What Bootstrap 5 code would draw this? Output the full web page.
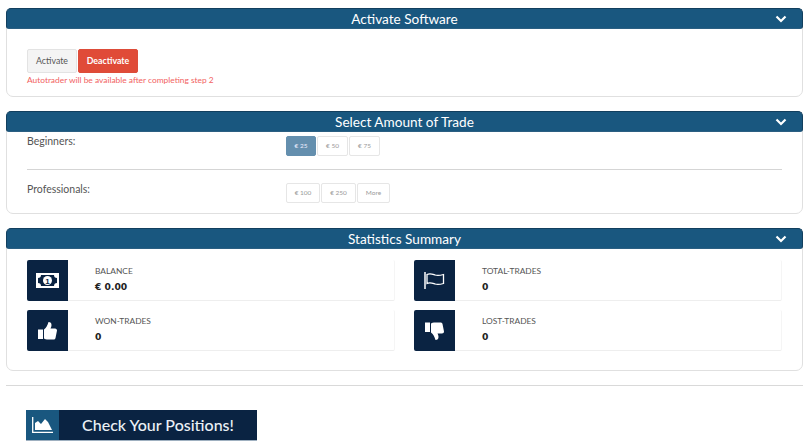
<!DOCTYPE html>
<html lang="en"><head><meta charset="utf-8"><title>Dashboard</title>
<link href="https://cdn.jsdelivr.net/npm/bootstrap@5.3.0/dist/css/bootstrap.min.css" rel="stylesheet">
<style>
html,body{height:443px;overflow:hidden}
body{background:#fff;font-family:"Lato",sans-serif;color:#555;padding:8px 2px 0 6px}
.panel-box{border:1px solid #e0e0e0;border-radius:7px;margin-bottom:14px;background:#fff}
.panel-head{height:21px;margin:-1px -1px 0;background:#19577f;border:1px solid #123f5e;border-bottom-color:#2b5f82;border-radius:5px 5px 3px 3px;color:#fff;font-size:13.6px;line-height:20px;position:relative;text-align:center}
.panel-head svg{position:absolute;right:15px;top:6px}
.body-one{height:67px;padding:20px 20px 0}
.soft-btn{font-size:8.8px;height:24px;width:50px;padding:0;line-height:22px;border-radius:2px;border:1px solid #e3e3e3;background:#f4f4f4;color:#555}
.soft-btn.red-btn{background:#e04b38;border-color:#dd4c39;color:#fff;font-weight:700;margin-left:1px;width:60px;padding:0}
.warn-line{color:#f2625f;font-size:8.4px;line-height:12px;margin-top:1px}
.body-two{height:81px;padding:0 20px}
.amt-row{height:37px;padding-top:2px}
.amt-row.second{height:44px;padding-top:12px;border-top:1px solid #d5d5d5}
.amt-label{width:259px;font-size:10.5px;line-height:15px;color:#555}
.amt-group{gap:1px;padding-top:2px}
.second .amt-group{padding-top:1px}
.amt-btn{height:20px;font-size:6.5px;line-height:18px;border:1px solid #e6e6e6;border-radius:2px;color:#999;background:#fff;text-align:center;padding:0}
.amt-btn.chosen{background:#648fae;border-color:#648fae;color:#eef}
.body-three{height:121px;padding:11px 20px 0;display:grid;grid-template-columns:368px 368px;column-gap:19px;row-gap:9px;grid-auto-rows:41px}
.stat-tile{display:flex;border-bottom:1px solid #eee;border-right:1px solid #f5f5f5;border-radius:2px}
.stat-icon{width:41px;height:41px;background:#0a2342;border-radius:2px 0 0 2px;display:flex;align-items:center;justify-content:center;flex:none}
.stat-text{padding:5px 0 0 27px}
.stat-name{font-size:8.4px;line-height:12px;color:#555}
.stat-val{font-family:"DejaVu Sans",sans-serif;font-weight:700;font-size:9.2px;line-height:12px;color:#222;margin-top:4px}
.rule-line{border-top:1px solid #d9d9d9;height:25px}
.cta-link{display:flex;width:231px;height:31px;margin-left:20px;background:#0a2342;border-bottom:1px solid #9fb0c0;text-decoration:none;color:#eaf0f5}
.cta-icon{width:33px;background:#19577f;display:flex;align-items:center;justify-content:center;flex:none}
.cta-text{flex:1;text-align:center;font-size:16px;line-height:30px;font-weight:500}
</style></head><body>

<section class="panel-box">
  <div class="panel-head">Activate Software<svg width="12" height="8" viewBox="0 0 12 8"><path d="M1.5 1.5 6 6l4.500-4.500" fill="none" stroke="#fff" stroke-width="2.200"/></svg></div>
  <div class="body-one">
    <div class="d-flex"><button class="btn soft-btn" type="button">Activate</button><button class="btn soft-btn red-btn" type="button">Deactivate</button></div>
    <div class="warn-line">Autotrader will be available after completing step 2</div>
  </div>
</section>

<section class="panel-box">
  <div class="panel-head">Select Amount of Trade<svg width="12" height="8" viewBox="0 0 12 8"><path d="M1.5 1.5 6 6l4.500-4.500" fill="none" stroke="#fff" stroke-width="2.200"/></svg></div>
  <div class="body-two">
    <div class="amt-row d-flex"><div class="amt-label">Beginners:</div><div class="amt-group d-flex"><button class="btn amt-btn chosen" style="width:30px" type="button">€ 25</button><button class="btn amt-btn" style="width:31px" type="button">€ 50</button><button class="btn amt-btn" style="width:31px" type="button">€ 75</button></div></div>
    <div class="amt-row second d-flex"><div class="amt-label">Professionals:</div><div class="amt-group d-flex"><button class="btn amt-btn" style="width:34px" type="button">€ 100</button><button class="btn amt-btn" style="width:35px" type="button">€ 250</button><button class="btn amt-btn" style="width:33px" type="button">More</button></div></div>
  </div>
</section>

<section class="panel-box">
  <div class="panel-head">Statistics Summary<svg width="12" height="8" viewBox="0 0 12 8"><path d="M1.5 1.5 6 6l4.500-4.500" fill="none" stroke="#fff" stroke-width="2.200"/></svg></div>
  <div class="body-three">
    <div class="stat-tile"><div class="stat-icon"><svg width="23" height="15" viewBox="0 0 23 15"><rect width="23" height="15" fill="#fff"/><path d="M5 2h13c0 2 1 3 3 3v5c-2 0-3 1-3 3H5c0-2-1-3-3-3V5c2 0 3-1 3-3z" fill="#0a2342"/><circle cx="11.500" cy="7.500" r="4.500" fill="#fff"/><text x="11.500" y="10.500" font-size="8" font-weight="700" text-anchor="middle" fill="#0a2342" font-family="Liberation Sans">1</text></svg></div><div class="stat-text"><div class="stat-name">BALANCE</div><div class="stat-val">€ 0.00</div></div></div>
    <div class="stat-tile"><div class="stat-icon"><svg width="21" height="17" viewBox="0 0 21 17"><path d="M1 0v17" stroke="#fff" stroke-width="1.500"/><path d="M3 2.500c3-1.500 5-.5 8 .5s5 .5 8.500-.5v9c-3.500 1-5.500 1.500-8.500.5s-5-2-8-.5z" fill="none" stroke="#fff" stroke-width="1.300"/></svg></div><div class="stat-text"><div class="stat-name">TOTAL-TRADES</div><div class="stat-val">0</div></div></div>
    <div class="stat-tile"><div class="stat-icon"><svg width="19" height="18" viewBox="0 0 19 18"><path d="M0 7.500h5V17H0z" fill="#fff"/><path d="M6 7.500c2.500-2 3.500-4 4.500-7.500 2 0 3 1 3 3 0 1.500-.5 2.500-1 3.500h4.500c1.300 0 2 1 2 2L17.500 16c-.3 1-1 1.500-2 1.500H9c-1 0-2-.5-3-1z" fill="#fff"/></svg></div><div class="stat-text"><div class="stat-name">WON-TRADES</div><div class="stat-val">0</div></div></div>
    <div class="stat-tile"><div class="stat-icon"><svg width="19" height="18" viewBox="0 0 19 18"><path d="M0 .5h5V10H0z" fill="#fff"/><path d="M6 10.500c2.500 2 3.500 4 4.500 7.500 2 0 3-1 3-3 0-1.500-.5-2.500-1-3.500h4.500c1.300 0 2-1 2-2L17.500 2c-.3-1-1-1.500-2-1.500H9c-1 0-2 .5-3 1z" fill="#fff"/></svg></div><div class="stat-text"><div class="stat-name">LOST-TRADES</div><div class="stat-val">0</div></div></div>
  </div>
</section>

<div class="rule-line"></div>
<a class="cta-link" href="#"><span class="cta-icon"><svg width="21" height="16" viewBox="0 0 21 16"><path d="M.7 0v15.300H21" fill="none" stroke="#fff" stroke-width="1.300"/><path d="M3 13V6l3-2 3 3 4-5 3 3 4 8z" fill="#fff"/></svg></span><span class="cta-text">Check Your Positions!</span></a>

<script src="https://cdn.jsdelivr.net/npm/bootstrap@5.3.0/dist/js/bootstrap.bundle.min.js"></script>
</body></html>
